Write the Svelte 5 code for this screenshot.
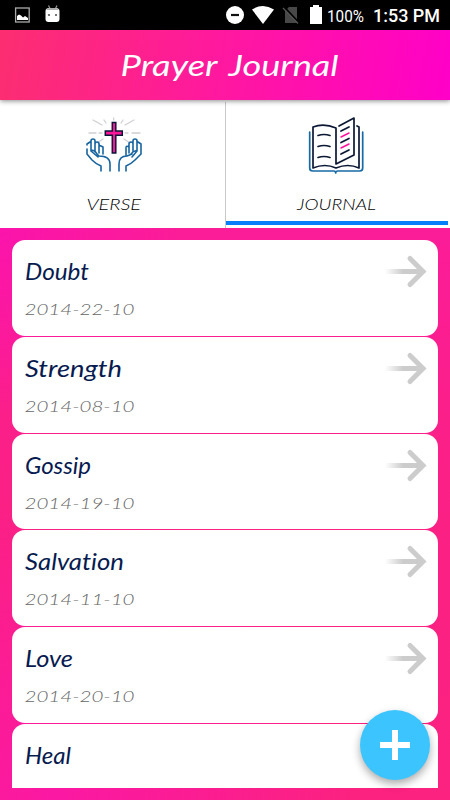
<script>
  const entries = [
    { name: 'Doubt', date: '2014-22-10', width: 64 },
    { name: 'Strength', date: '2014-08-10', width: 97 },
    { name: 'Gossip', date: '2014-19-10', width: 66 },
    { name: 'Salvation', date: '2014-11-10', width: 99 },
    { name: 'Love', date: '2014-20-10', width: 48 },
    { name: 'Heal', date: '', width: 46 }
  ];
</script>

<div class="screen">
  <header class="status">
    <svg width="450" height="30" viewBox="0 0 450 30">
      <rect x="15.6" y="8" width="13.6" height="14" fill="none" stroke="#aaa" stroke-width="1.3" />
      <path d="M17 20v-4l2-1.500 2 1 2 2 2-1.500 3 2v2z" fill="#fff" />
      <path d="M48.500 5.500l2 4M57 5.500l-2 4" stroke="#999" stroke-width="1.200" />
      <path d="M45.500 11q0-3 4-3h6q4 0 4 3v8q0 3-3 3h-8q-3 0-3-3z" fill="#fff" />
      <path d="M46 10q1-2 4-2h5q3 0 4 2z" fill="#aaa" />
      <circle cx="49" cy="15" r="1.100" fill="#555" /><circle cx="56" cy="15" r="1.100" fill="#555" />
      <circle cx="235" cy="15" r="9" fill="#fff" />
      <path d="M231 15h8" stroke="#111" stroke-width="2.200" />
      <path d="M252 9.500q11-7 22 0L263 24z" fill="#fff" />
      <path d="M285 11l4-4h8v16h-12z" fill="#484848" />
      <path d="M284.500 7.500l15 16" stroke="#000" stroke-width="2" />
      <path d="M283 8l15 15.500" stroke="#555" stroke-width="1.300" />
      <path d="M310 7h3V5h6v2h3v17h-12z" fill="#fff" />
      <text x="327" y="21.500" textLength="37" lengthAdjust="spacingAndGlyphs" class="battery">100%</text>
      <text x="373" y="22" textLength="67" lengthAdjust="spacingAndGlyphs" class="clock">1:53 PM</text>
    </svg>
  </header>

  <div class="title">
    <svg width="450" height="70" viewBox="0 0 450 70">
      <text class="hand" x="120.500" y="46" font-size="29.500" fill="#fff" textLength="97" lengthAdjust="spacingAndGlyphs">Prayer</text>
      <text class="hand" x="228.500" y="46" font-size="29.500" fill="#fff" textLength="110" lengthAdjust="spacingAndGlyphs">Journal</text>
    </svg>
  </div>

  <nav class="tabs">
    <div class="tab">
      <svg width="225" height="125" viewBox="0 0 225 125" fill="none" stroke-linecap="round" stroke-linejoin="round">
        <g stroke="#d0d0d4" stroke-width="1.300">
          <path d="M93 18l9 5M134 18l-9 5M89 31h7M132 31h8M99 31h3M125 31h3M104 18l2 3M123 18l-2 3M97 41l6-4M130 41l-6-4M113.700 16v2" />
        </g>
        <path d="M112.300 20.500h3.500v8.500h6.500v4.200h-6.500v17.800h-3.500V33.200h-7V29h7z" fill="#ff1598" stroke="#091638" stroke-width="1.500" stroke-linejoin="miter" />
        <g stroke="#17649f" stroke-width="1.600">
          <path d="M101 69v-5q-5-2-9-6l-5-6v-5M87 43v-1l3-2M91 49V39q0-2 2-2t2 2v11M95 42q0-2 2-2t2 2v9M99 45q0-2 2-1l2 1v7M91 49l7 6M91 49q3-2 6 3l2 2q11 0 11 8v7" />
          <path d="M119 69v-7q0-8 8-8l5-2M126 69v-5q5-2 9-6l6-6V42l-3-2M137 49V39q0-2-2-2t-2 2v11M133 42q0-2-2-2t-2 2v9M129 45q-3-2-3 1v7M137 49l-5 6M137 49q-3-1-6 3" />
        </g>
        <text class="hand light" x="86.500" y="108" font-size="16" fill="#000" textLength="54.500" lengthAdjust="spacingAndGlyphs">VERSE</text>
      </svg>
    </div>
    <div class="tab active">
      <svg width="224" height="120" viewBox="226 0 224 120" fill="none" stroke-linecap="round" stroke-linejoin="round">
        <path d="M309.700 30v36q0 3 3 3h21q2 0 2 2 0-2 2-2h22q3 0 3-3V30" stroke="#176aa6" stroke-width="1.700" />
        <g stroke="#0b1834" stroke-width="1.700">
          <path d="M336 26q-12-5-23-1v41q12-5 23 0 12-5 23 0V25l-2-1M336 26v36l18-9V16l-15 8" />
          <path d="M318 33.500q6-2 12 0M318 44.500q6-2 12 0M318 55.500q6-2 12 0M341 29l8-4M341 40.500l8-4M341 52l8-4" />
        </g>
        <path d="M341 35l8-4M341 46l8-4" stroke="#ff169a" stroke-width="1.500" />
        <text class="hand light" x="297" y="108" font-size="16" fill="#000" textLength="79" lengthAdjust="spacingAndGlyphs">JOURNAL</text>
      </svg>
      <div class="indicator"></div>
    </div>
  </nav>

  <main>
    <div class="list">
      {#each entries as entry}
        <article>
          <svg class="copy" width="180" height="96" viewBox="0 0 180 96">
            <text class="hand" x="13" y="39.900" font-size="22.500" fill="#081b50" textLength={entry.width} lengthAdjust="spacingAndGlyphs">{entry.name}</text>
            {#if entry.date}
              <text class="hand light" x="12.500" y="74.900" font-size="15.500" fill="#666" textLength="110" lengthAdjust="spacingAndGlyphs">{entry.date}</text>
            {/if}
          </svg>
          <svg class="arrow" width="46" height="40" viewBox="0 0 46 40" fill="none">
            <defs>
              <linearGradient id="fade" gradientUnits="userSpaceOnUse" x1="2" y1="0" x2="20" y2="0">
                <stop offset="0" stop-color="#ccc" stop-opacity="0" /><stop offset="1" stop-color="#ccc" />
              </linearGradient>
            </defs>
            <path d="M2 18h36v5H2z" fill="url(#fade)" />
            <path d="M27 7.500l13 13-13 13" stroke="#ccc" stroke-width="5" stroke-linecap="round" />
          </svg>
        </article>
      {/each}
    </div>
  </main>
  <button aria-label="Add entry">
    <svg width="70" height="70" viewBox="0 0 70 70"><path d="M20 35h30M35 20v30" stroke="#fff" stroke-width="6" /></svg>
  </button>
</div>

<style>
  :global(body) { margin: 0; overflow: hidden; }
  .screen { width: 450px; height: 800px; position: relative; display: flex; flex-direction: column; overflow: hidden; font-family: Lato, sans-serif; }
  svg { display: block; }
  .hand { font-family: Lato, sans-serif; font-style: italic; font-weight: 400; font-variant-ligatures: none; }
  .light { font-weight: 300; }
  .status { height: 30px; background: #000; }
  .battery { font: 17px Roboto, sans-serif; fill: #fff; }
  .clock { font: 500 19px Roboto, sans-serif; fill: #fff; }
  .title { height: 70px; background: linear-gradient(100deg, #fc2e70, #ff18a0 50%, #ff00c8); box-shadow: 0 1px 5px #0007; z-index: 1; }
  .tabs { height: 127.500px; padding-top: 2px; box-sizing: border-box; display: flex; background: #fff; }
  .tab { flex: 1; overflow: hidden; }
  .active { border-left: 1px solid #c8c8c8; }
  .indicator { height: 4px; width: 222px; background: #087dfa; margin-top: -1px; }
  main { flex: 1; min-height: 0; padding: 12.500px 12px; box-sizing: border-box; background: radial-gradient(circle at 12% 100%, #fb18a3, #fb18a300 300px), radial-gradient(circle at 0 0, #fb14ab, #fb14ab00 180px), linear-gradient(#fb1c98, #fb2085 45%, #fb2280); }
  .list { height: 547.500px; overflow: hidden; }
  article { height: 95.800px; width: 426px; margin-bottom: 1px; box-sizing: border-box; border-radius: 13px; background: #fff; display: flex; justify-content: space-between; }
  .arrow { margin: 11px 9px 0 0; }
  button { position: absolute; left: 360px; top: 710px; width: 70px; height: 70px; border: 0; border-radius: 50%; padding: 0; background: #3cc4ff; box-shadow: 0 4px 9px #0005; }
</style>
